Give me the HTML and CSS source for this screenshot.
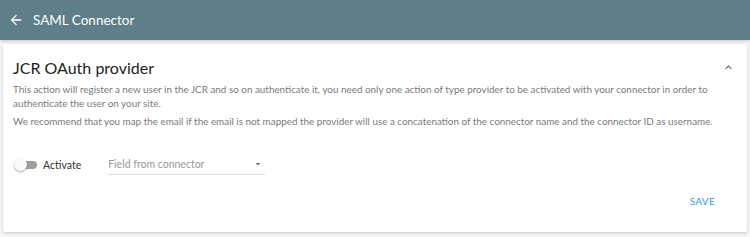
FILE: index.html
```html
<!DOCTYPE html>
<html>
<head>
<meta charset="utf-8">
<link rel="stylesheet" href="styles.css">
</head>
<body>
<header class="appbar">
  <svg class="back" width="16" height="16" viewBox="0 0 24 24"><path d="M20 11H7.83l5.59-5.59L12 4l-8 8 8 8 1.41-1.41L7.83 13H20v-2z" fill="#fff"/></svg>
  <span class="apptitle">SAML Connector</span>
</header>
<main class="page">
  <section class="card">
    <div class="card-head">
      <h1 class="title">JCR OAuth provider</h1>
      <svg class="chev" width="13" height="13" viewBox="0 0 24 24"><path d="M7.41 15.41L12 10.83l4.59 4.58L18 14l-6-6-6 6z" fill="#666"/></svg>
    </div>
    <p class="desc first">This action will register a new user in the JCR and so on authenticate it, you need only one action of type provider to be activated with your connector in order to authenticate the user on your site.</p>
    <p class="desc">We recommend that you map the email if the email is not mapped the provider will use a concatenation of the connector name and the connector ID as username.</p>
    <div class="row">
      <label class="switch"><span class="track"></span><span class="thumb"></span></label>
      <span class="label">Activate</span>
      <div class="select">
        <span class="placeholder">Field from connector</span>
        <svg width="12" height="12" viewBox="0 0 24 24"><path d="M7 10l5 5 5-5z" fill="#777"/></svg>
      </div>
    </div>
    <div class="actions"><button class="save">SAVE</button></div>
  </section>
</main>
</body>
</html>
```
FILE: styles.css
```css
* { box-sizing: border-box; }
html, body { margin: 0; padding: 0; }
body { background: #f5f5f5; font-family: "Lato", "Noto Sans", sans-serif; width: 750px; height: 237px; overflow: hidden; }
.appbar { height: 40px; background: #5e7e89; display: flex; align-items: center; padding-left: 8px; box-shadow: 0 1px 3px rgba(0,0,0,0.2); }
.back { margin-right: 9px; }
.apptitle { color: #fff; font-size: 13.5px; }
.page { padding: 4px 3px 0 3px; }
.card { background: #fff; height: 188px; box-shadow: 0 1px 3px rgba(0,0,0,0.2); padding: 14px 10px 0 10px; border-radius: 2px; }
.card-head { display: flex; justify-content: space-between; align-items: center; }
.title { margin: 0; font-weight: 400; font-size: 16px; color: #222; }
.chev { margin-right: 2px; }
.desc { margin: 4px 0 0 0; font-size: 9.9px; line-height: 14px; color: #7a7a7a; }
.desc.first { margin-top: 5px; }
.row { display: flex; align-items: center; margin-top: 26px; padding-left: 1px; }
.switch { position: relative; width: 24px; height: 12px; margin-right: 5px; }
.track { position: absolute; left: 4px; top: 2px; width: 19px; height: 8px; border-radius: 4px; background: #9e9e9e; }
.thumb { position: absolute; left: 0; top: -1px; width: 13px; height: 13px; border-radius: 50%; background: #fafafa; box-shadow: 0 1px 2px rgba(0,0,0,0.35); }
.label { font-size: 10.5px; color: #333; margin-right: 27px; }
.select { width: 157px; display: flex; justify-content: space-between; align-items: center; border-bottom: 1px solid #ddd; padding: 4px 1px 4px 0; }
.placeholder { font-size: 10.5px; color: #999; }
.actions { display: flex; justify-content: flex-end; margin-top: 20px; padding-right: 22px; }
.save { background: none; border: 0; font-family: inherit; color: #3b96f0; font-size: 10px; letter-spacing: 0.3px; padding: 0; }
```
